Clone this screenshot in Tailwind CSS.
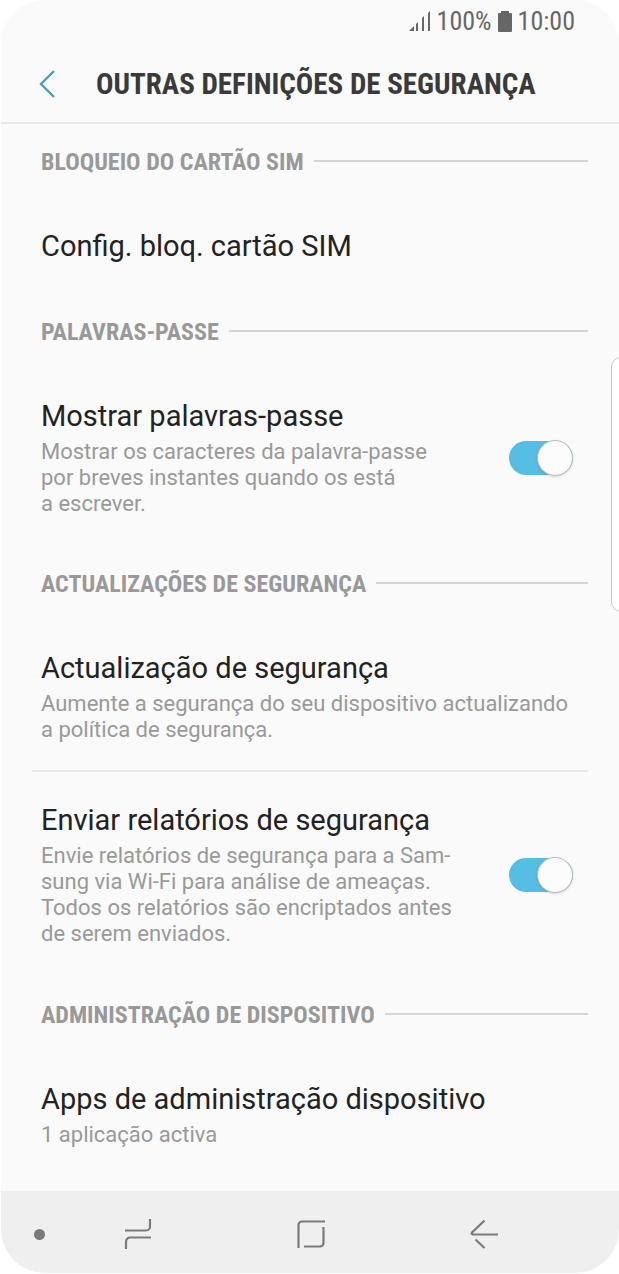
<!DOCTYPE html>
<html lang="pt">
<head>
  <meta charset="UTF-8">
  <meta name="viewport" content="width=device-width, initial-scale=1.0">
  <title>Outras definições de segurança</title>
  <script src="https://cdn.jsdelivr.net/npm/@tailwindcss/browser@4"></script>
</head>
<body class="bg-white font-['Roboto',sans-serif] overflow-x-hidden">
<div class="relative flex flex-col min-h-screen pl-px pb-px overflow-hidden">
  <div class="flex flex-col flex-1 bg-[#fafafa] rounded-[44px] overflow-hidden">

    <!-- Status bar -->
    <div class="flex items-center justify-end gap-[6px] h-[42px] pr-11 text-[26px] leading-[30px] text-[#666] font-['Roboto_Condensed','Roboto',sans-serif]">
      <svg class="w-[22px] h-5" viewBox="0 0 22 20" fill="#666">
        <path d="M0 20l5-5v5z"/>
        <path d="M7 13l2-2v9H7zM13 7l2-2v15h-2zM19 2l2-2v20h-2z"/>
      </svg>
      <span>100%</span>
      <svg class="w-[14px] h-[21px]" viewBox="0 0 14 21" fill="#666">
        <path d="M3 0h8v2h2a1 1 0 0 1 1 1v17a1 1 0 0 1-1 1H1a1 1 0 0 1-1-1V3a1 1 0 0 1 1-1h2z"/>
      </svg>
      <span>10:00</span>
    </div>

    <!-- Title bar -->
    <header class="flex items-center h-[82px] pt-[3px] pl-[38px] border-b-2 border-[#e8e8e8]">
      <button type="button" aria-label="Voltar" class="w-[57px] shrink-0">
        <svg class="w-4 h-7" viewBox="0 0 16 28" fill="none" stroke="#4a9dbd" stroke-width="2.4">
          <path d="M15 1L2 14l13 13"/>
        </svg>
      </button>
      <h1 class="text-[29px] leading-9 font-bold text-[#3a3a3a] whitespace-nowrap font-['Roboto_Condensed','Roboto',sans-serif]">OUTRAS DEFINIÇÕES DE SEGURANÇA</h1>
    </header>

    <main class="flex-1 pl-10 pr-[31px] text-[22px] leading-[26px] text-[#999]">
      <section>
        <div class="flex items-center gap-[10px] h-[74px]">
          <h2 class="pt-[2px] text-2xl font-bold whitespace-nowrap font-['Roboto_Condensed','Roboto',sans-serif]">BLOQUEIO DO CARTÃO SIM</h2>
          <span class="flex-1 h-[2px] bg-[#d4d4d4]"></span>
        </div>
        <a href="#" class="block py-[30px]">
          <h3 class="text-[29px] leading-9 text-[#222]">Config. bloq. cartão SIM</h3>
        </a>
      </section>

      <section>
        <div class="flex items-center gap-[10px] h-[74px]">
          <h2 class="pt-[2px] text-2xl font-bold whitespace-nowrap font-['Roboto_Condensed','Roboto',sans-serif]">PALAVRAS-PASSE</h2>
          <span class="flex-1 h-[2px] bg-[#d4d4d4]"></span>
        </div>
        <div class="flex items-center justify-between pt-[30px] pb-[29px] pr-[15px]">
          <label for="showPasswords">
            <span class="block text-[29px] leading-9 text-[#222]">Mostrar palavras-passe</span>
            <span class="block mt-[5px]">Mostrar os caracteres da palavra-passe<br>por breves instantes quando os está<br>a escrever.</span>
          </label>
          <input id="showPasswords" type="checkbox" checked class="appearance-none relative shrink-0 w-16 h-[34px] rounded-full bg-[#ccc] checked:bg-[#56bde4] before:absolute before:-top-px before:left-0 checked:before:left-7 before:size-9 before:rounded-full before:bg-[#fcfcfc] before:border before:border-[#bbb] before:shadow-sm">
        </div>
      </section>

      <section>
        <div class="flex items-center gap-[10px] h-[74px]">
          <h2 class="pt-[2px] text-2xl font-bold whitespace-nowrap font-['Roboto_Condensed','Roboto',sans-serif]">ACTUALIZAÇÕES DE SEGURANÇA</h2>
          <span class="flex-1 h-[2px] bg-[#d4d4d4]"></span>
        </div>
        <a href="#" class="block pt-[30px] pb-[27px]">
          <h3 class="text-[29px] leading-9 text-[#222]">Actualização de segurança</h3>
          <p class="mt-[5px] whitespace-nowrap">Aumente a segurança do seu dispositivo actualizando<br>a política de segurança.</p>
        </a>
        <div class="flex items-center justify-between -ml-[9px] pl-[9px] py-[30px] pr-[15px] border-t-2 border-[#e8e8e8]">
          <label for="sendReports">
            <span class="block text-[29px] leading-9 text-[#222]">Enviar relatórios de segurança</span>
            <span class="block mt-[5px]">Envie relatórios de segurança para a Sam-<br>sung via Wi-Fi para análise de ameaças.<br>Todos os relatórios são encriptados antes<br>de serem enviados.</span>
          </label>
          <input id="sendReports" type="checkbox" checked class="appearance-none relative shrink-0 w-16 h-[34px] rounded-full bg-[#ccc] checked:bg-[#56bde4] before:absolute before:-top-px before:left-0 checked:before:left-7 before:size-9 before:rounded-full before:bg-[#fcfcfc] before:border before:border-[#bbb] before:shadow-sm">
        </div>
      </section>

      <section>
        <div class="flex items-center gap-[10px] h-[74px]">
          <h2 class="pt-[2px] text-2xl font-bold whitespace-nowrap font-['Roboto_Condensed','Roboto',sans-serif]">ADMINISTRAÇÃO DE DISPOSITIVO</h2>
          <span class="flex-1 h-[2px] bg-[#d4d4d4]"></span>
        </div>
        <a href="#" class="block py-[30px]">
          <h3 class="text-[29px] leading-9 text-[#222]">Apps de administração dispositivo</h3>
          <p class="mt-[5px]">1 aplicação activa</p>
        </a>
      </section>
    </main>

    <!-- Navigation bar -->
    <nav class="flex items-center h-[82px] pr-[49px] bg-[#efefef] text-[#7a7a7a]">
      <button type="button" aria-label="Ocultar barra" class="flex justify-end w-[50px] pr-[6px]">
        <span class="size-[11px] mt-1 rounded-full bg-[#7a7a7a]"></span>
      </button>
      <button type="button" aria-label="Recentes" class="flex flex-1 justify-center">
        <svg class="w-7 h-[30px] mt-[3px]" viewBox="0 0 28 30" fill="none" stroke="currentColor" stroke-width="2.2">
          <path d="M1 11.5h21a4 4 0 0 0 4-4V0M27 18.5H6a4 4 0 0 0-4 4V30"/>
        </svg>
      </button>
      <button type="button" aria-label="Início" class="flex flex-1 justify-center">
        <svg class="w-7 h-7 mt-[3px]" viewBox="0 0 28 28" fill="none" stroke="currentColor" stroke-width="2.2">
          <path d="M1.5 28V5A3.5 3.5 0 0 1 5 1.5h23M26.5 7v16a3.5 3.5 0 0 1-3.5 3.5H7"/>
        </svg>
      </button>
      <button type="button" aria-label="Retroceder" class="flex flex-1 justify-center">
        <svg class="w-7 h-[30px] mt-[3px]" viewBox="0 0 28 30" fill="none" stroke="currentColor" stroke-width="2.2">
          <path d="M14.500 1.500L2 13.500q-1 1.500 1 2H28M5.500 20.500L14.500 29"/>
        </svg>
      </button>
    </nav>
  </div>

  <!-- Edge panel handle -->
  <div class="absolute top-[357px] -right-3 w-5 h-[255px] bg-white border border-[#c8c8c8] rounded-[10px]"></div>
</div>
</body>
</html>
